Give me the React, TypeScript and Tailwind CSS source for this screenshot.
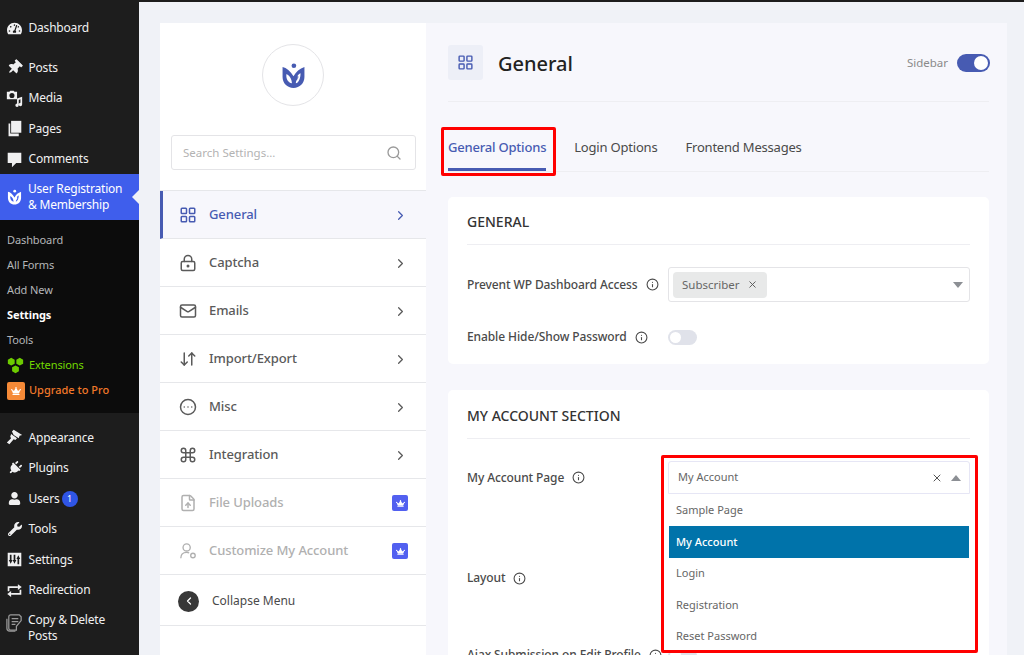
import { ReactNode } from "react";
import { FaCrown, FaPlug, FaTachometerAlt, FaThumbtack, FaUser, FaWrench } from "react-icons/fa";
import {
  ArrowDownUp,
  ChevronLeft,
  ChevronRight,
  CircleEllipsis,
  Command,
  FileUp,
  Info,
  LayoutGrid,
  LockKeyhole,
  Mail,
  Search,
  X,
} from "lucide-react";

const Logo = ({ className }: { className: string }) => (
  <svg viewBox="0 0 32 32" className={className} fill="currentColor">
    <circle cx="16.500" cy="3.500" r="3" />
    <path
      fillRule="evenodd"
      d="M2 5c5 1 10 5 14 12 3-6 8-10 14-12v13c0 8-6 14-14 14S2 26 2 18V5Zm5 9c-1 6 2 11 7 12 0-5-3-10-7-12Zm18-1c-2 1-3 2-4 4l2 1-2 1 .5 1c-2 2-2.500 4-2.500 6 4-1 6-7 6-13Z"
    />
  </svg>
);

const MediaIcon = () => (
  <svg viewBox="0 0 20 20" className="h-[17px] w-[17px]" fill="currentColor">
    <path d="M1 2h3l1-1h4l1 1h3v9H1V2Zm6 1.500a3 3 0 1 0 0 6 3 3 0 0 0 0-6Z" />
    <path d="M13 10l6-2v9a2 2 0 1 1-2-2V11l-2 .7V18a2 2 0 1 1-2-2v-6Z" />
  </svg>
);

const PagesIcon = () => (
  <svg viewBox="0 0 20 20" className="h-[17px] w-[17px]" fill="currentColor">
    <path d="M6 1h12v14H6V1Z" />
    <path d="M3 4h2v12h10v3H3V4Z" />
  </svg>
);

const CommentIcon = () => (
  <svg viewBox="0 0 20 20" className="h-[17px] w-[17px]" fill="currentColor">
    <path d="M2 2h16v12h-6l-5 5v-5H2V2Z" />
  </svg>
);

const BrushIcon = () => (
  <svg viewBox="0 0 20 20" className="h-[17px] w-[17px]" fill="currentColor">
    <path d="M9 1l10 6-3 1-1 3-6-4-2-4 2-2Z" />
    <path d="M6 6l7 5-2 2-2-1-5 6-3-2 5-5-1-2 1-3Z" />
  </svg>
);

const SlidersIcon = () => (
  <svg viewBox="0 0 20 20" className="h-[17px] w-[17px]" fill="currentColor">
    <path
      fillRule="evenodd"
      d="M2 2h16v16H2V2Zm2.500 2.500v6H3.300L5.500 15l2.200-4.500H6.500v-6h-2Zm4.500 0v6H7.800l2.200 4.500 2.200-4.500H11v-6H9Zm4.500 11h2v-6h1.200L14.500 5l-2.200 4.500h1.200v6Z"
    />
  </svg>
);

const RepeatIcon = () => (
  <svg viewBox="0 0 20 20" className="h-[17px] w-[17px]" fill="none" stroke="currentColor" strokeWidth="2">
    <path d="M3 11V6h11" />
    <path d="M17 9v5H6" />
    <path d="M14 2.500 18.500 6 14 9.500Z" fill="currentColor" stroke="none" />
    <path d="M6 10.500 1.500 14 6 17.500Z" fill="currentColor" stroke="none" />
  </svg>
);

const CopyPostsIcon = () => (
  <svg viewBox="0 0 20 20" className="h-[19px] w-[19px]" fill="none" stroke="currentColor" strokeWidth="1.300">
    <path d="M6 2h9l2 2v4l-5 6v4H6a2 2 0 0 1-2-2V4a2 2 0 0 1 2-2Z" />
    <path d="M2 6v10a3 3 0 0 0 3 3h6M7 6h7M7 9h7M7 12h4" />
  </svg>
);

const HexIcon = () => (
  <svg viewBox="0 0 20 20" className="h-[17px] w-[17px] text-[#6dcb00]" fill="currentColor">
    <path d="M5 1l4 2.200v4.600L5 10 1 7.800V3.200L5 1ZM15 1l4 2.200v4.600L15 10l-4-2.200V3.200L15 1ZM10 10l4 2.200v4.600L10 19l-4-2.200v-4.600L10 10Z" />
  </svg>
);

const UserGearIcon = () => (
  <svg viewBox="0 0 20 20" className="h-[18px] w-[18px]" fill="none" stroke="currentColor" strokeWidth="1.500">
    <circle cx="8.500" cy="6" r="4" />
    <path d="M2 18c0-4 2.500-6.500 6.500-6.500 1 0 2 .2 2.800.5" />
    <circle cx="15.500" cy="15" r="2.500" />
  </svg>
);

const TopItem = ({ icon, label, extra }: { icon: ReactNode; label: string; extra?: ReactNode }) => (
  <div className="flex h-[30.5px] items-center text-[12px] tracking-[-0.2px] text-[#f0f0f1]">
    <span className="flex w-[28.500px] shrink-0 items-center justify-center pl-[1px] text-[#f0f0f1]">{icon}</span>
    <span>{label}</span>
    {extra}
  </div>
);

const SubItem = ({ label, active }: { label: string; active?: boolean }) => (
  <div className={`flex h-[25px] items-center pl-[7px] text-[11px] tracking-[-0.1px] ${active ? "font-bold text-white" : "text-[#b4b6b9]"}`}>
    {label}
  </div>
);

const Sidebar = () => (
  <aside className="w-[139px] shrink-0 bg-[#1d1d1d]">
    <div className="pt-[11px]">
      <TopItem icon={<FaTachometerAlt size={15} />} label="Dashboard" />
    </div>
    <div className="mt-[9px]">
      <TopItem icon={<FaThumbtack size={15} className="rotate-45" />} label="Posts" />
      <TopItem icon={<MediaIcon />} label="Media" />
      <TopItem icon={<PagesIcon />} label="Pages" />
      <TopItem icon={<CommentIcon />} label="Comments" />
    </div>
    <div className="relative -mt-px flex h-[46px] items-center bg-[#3f5eec] text-[12px] leading-[16px] tracking-[-0.2px] text-white">
      <span className="flex w-[28px] shrink-0 items-center justify-center pl-[1px]">
        <Logo className="h-[16px] w-[15px]" />
      </span>
      <span>
        User Registration
        <br />& Membership
      </span>
      <span className="absolute right-0 top-[16px] h-0 w-0 border-y-[7px] border-r-[7px] border-y-transparent border-r-[#f0f2f7]" />
    </div>
    <div className="h-[193px] bg-[#0c0c0c] pt-[8px]">
      <SubItem label="Dashboard" />
      <SubItem label="All Forms" />
      <SubItem label="Add New" />
      <SubItem active label="Settings" />
      <SubItem label="Tools" />
      <div className="flex h-[25px] items-center gap-[5px] pl-[7px] text-[11px] tracking-[-0.1px] text-[#72d800]">
        <HexIcon />
        Extensions
      </div>
      <div className="mt-[1px] flex h-[24px] items-center gap-[4px] pl-[7px] text-[11px] font-medium text-[#f0782a]">
        <span className="flex h-[18px] w-[18px] items-center justify-center rounded-[2px] bg-[#f58a37] text-white">
          <FaCrown size={10} />
        </span>
        Upgrade to Pro
      </div>
    </div>
    <div className="pt-[10px]">
      <TopItem icon={<BrushIcon />} label="Appearance" />
      <TopItem icon={<FaPlug size={14} className="rotate-45" />} label="Plugins" />
      <TopItem
        icon={<FaUser size={13} />}
        label="Users"
        extra={
          <span className="ml-[2px] flex h-[16px] w-[16px] items-center justify-center rounded-full bg-[#2f55e6] text-[9px] text-white">
            1
          </span>
        }
      />
      <TopItem icon={<FaWrench size={14} />} label="Tools" />
      <TopItem icon={<SlidersIcon />} label="Settings" />
      <TopItem icon={<RepeatIcon />} label="Redirection" />
      <div className="flex pt-[6px] text-[12px] leading-[16px] tracking-[-0.2px] text-[#f0f0f1]">
        <span className="flex w-[28px] shrink-0 justify-center pl-[1px] pt-[1px] text-[#9a9a9a]">
          <CopyPostsIcon />
        </span>
        <span>
          Copy &amp; Delete
          <br />
          Posts
        </span>
      </div>
    </div>
  </aside>
);

const MenuRow = ({
  icon,
  label,
  active,
  locked,
}: {
  icon: ReactNode;
  label: string;
  active?: boolean;
  locked?: boolean;
}) => (
  <div
    className={`flex h-[48px] items-center border-b border-[#e6e7ea] pr-[18px] pt-[1px] text-[13px] font-medium tracking-[-0.1px] ${
      active
        ? "border-l-[3px] border-l-[#475bb2] bg-[#f7f7fc] pl-[16px] text-[#475bb2]"
        : locked
          ? "pl-[19px] text-[#b0b0b0]"
          : "pl-[19px] text-[#5a5a5a]"
    }`}
  >
    <span className="flex w-[30px] shrink-0">{icon}</span>
    <span className="flex-1">{label}</span>
    {locked ? (
      <span className="flex h-[16px] w-[16px] items-center justify-center rounded-[2px] bg-[#5260f0] text-white">
        <FaCrown size={9} />
      </span>
    ) : (
      <ChevronRight size={15} strokeWidth={2} />
    )}
  </div>
);

const SettingsMenu = () => (
  <div className="w-[266px] shrink-0 bg-white">
    <div className="pt-[21px]">
      <div className="mx-auto flex h-[62px] w-[62px] items-center justify-center rounded-full border border-[#e4e4e7]">
        <Logo className="h-[27px] w-[25px] text-[#475bb2]" />
      </div>
    </div>
    <div className="ml-[11px] mr-[10px] mt-[29px] flex h-[35px] items-center justify-between rounded-[3px] border border-[#e4e4e7] pl-[11px] pr-[13px] text-[11.500px] text-[#b3b3b3]">
      <span>Search Settings...</span>
      <Search size={16} className="text-[#9a9a9a]" />
    </div>
    <div className="mt-[20px] border-t border-[#e6e7ea]">
      <MenuRow active icon={<LayoutGrid size={18} />} label="General" />
      <MenuRow icon={<LockKeyhole size={18} />} label="Captcha" />
      <MenuRow icon={<Mail size={18} />} label="Emails" />
      <MenuRow icon={<ArrowDownUp size={18} />} label="Import/Export" />
      <MenuRow icon={<CircleEllipsis size={18} />} label="Misc" />
      <MenuRow icon={<Command size={18} />} label="Integration" />
      <MenuRow locked icon={<FileUp size={18} />} label="File Uploads" />
      <MenuRow locked icon={<UserGearIcon />} label="Customize My Account" />
      <div className="flex h-[51px] items-center gap-[13px] border-b border-[#e6e7ea] pl-[18px] pt-[2px] text-[12px] text-[#4a4a4a]">
        <span className="flex h-[21px] w-[21px] items-center justify-center rounded-full bg-[#383838] text-white">
          <ChevronLeft size={12} strokeWidth={2.500} />
        </span>
        Collapse Menu
      </div>
    </div>
  </div>
);

const Label = ({ text }: { text: string }) => (
  <span className="flex items-center gap-[8px] whitespace-nowrap text-[12px] font-medium tracking-[-0.1px] text-[#4a4a4a]">
    {text}
    <Info size={13} />
  </span>
);

const Toggle = () => (
  <span className="flex h-[15px] w-[29px] items-center rounded-full bg-[#e0e2ea] pl-[2px]">
    <span className="h-[11px] w-[11px] rounded-full bg-white" />
  </span>
);

const options = ["Sample Page", "My Account", "Login", "Registration", "Reset Password"];

const SettingsContent = () => (
  <div className="flex-1 bg-[#f7f7fc] pl-[22px] pr-[18px] pt-[22px]">
    <div className="flex h-[35px] items-center">
      <span className="flex h-[35px] w-[35px] items-center justify-center rounded-[3px] bg-[#edeff7] text-[#475bb2]">
        <LayoutGrid size={17} />
      </span>
      <h1 className="ml-[15px] flex-1 pt-[2px] text-[20px] font-medium text-[#222]">General</h1>
      <span className="text-[11.500px] text-[#8a8a8a]">Sidebar</span>
      <span className="-mr-px ml-[9px] flex h-[18px] w-[33px] items-center justify-end rounded-full bg-[#475bb2] pr-[2px]">
        <span className="h-[14px] w-[14px] rounded-full bg-white" />
      </span>
    </div>
    <div className="mt-[21px] flex h-[71px] items-end gap-[28px] border-y border-[#eeeef2] text-[13px] tracking-[-0.2px] text-[#4a4a4a]">
      <span className="h-[34px] border-b-[3px] border-[#475bb2] pt-[1px] font-medium text-[#475bb2]">General Options</span>
      <span className="h-[34px] pt-[1px]">Login Options</span>
      <span className="h-[34px] pt-[1px]">Frontend Messages</span>
    </div>
    <section className="mt-[25px] h-[167px] rounded-[5px] bg-white px-[19px]">
      <h2 className="flex h-[48px] items-center border-b border-[#eeeef2] pt-[2px] text-[14px] font-medium text-[#333]">GENERAL</h2>
      <div className="mt-[22px] grid grid-cols-[201px_1fr] items-center">
        <Label text="Prevent WP Dashboard Access" />
        <div className="flex h-[35px] items-center justify-between rounded-[3px] border border-[#e4e4e7] pl-[4px] pr-[6px]">
          <span className="flex h-[26px] items-center gap-[7px] rounded-[4px] bg-[#e8e9e9] px-[9px] text-[11.500px] text-[#666]">
            Subscriber
            <X size={11} className="text-[#555]" />
          </span>
          <span className="h-0 w-0 border-x-[5.500px] border-t-[6px] border-x-transparent border-t-[#8c8f94]" />
        </div>
      </div>
      <div className="mt-[26px] grid grid-cols-[201px_1fr] items-center">
        <Label text="Enable Hide/Show Password" />
        <Toggle />
      </div>
    </section>
    <section className="mt-[26px] h-[300px] rounded-[5px] bg-white px-[19px]">
      <h2 className="flex h-[49px] items-center border-b border-[#eeeef2] pt-[2px] text-[14px] font-medium text-[#333]">MY ACCOUNT SECTION</h2>
      <div className="mt-[22px] grid grid-cols-[201px_1fr] items-center">
        <Label text="My Account Page" />
        <div className="relative flex h-[33px] items-center justify-between rounded-t-[3px] border border-[#e6e6f5] pl-[9px] pr-[8px] text-[11px] text-[#666]">
          My Account
          <span className="flex items-center gap-[8px]">
            <X size={12} className="text-[#555]" />
            <span className="h-0 w-0 border-x-[5.500px] border-b-[6px] border-x-transparent border-b-[#8c8f94]" />
          </span>
          <div className="absolute left-0 right-0 top-[32.500px] z-10 bg-white text-[#666]">
            {options.map((option) =>
              option === "My Account" ? (
                <div key={option} className="flex h-[31.500px] items-center bg-[#0073aa] pl-[7px] font-medium text-white">
                  {option}
                </div>
              ) : (
                <div key={option} className="flex h-[31.500px] items-center pl-[7px]">
                  {option}
                </div>
              ),
            )}
          </div>
          <div className="absolute -left-[8px] -right-[9px] -top-[7px] z-20 h-[198px] rounded-[2px] border-[3px] border-[#f00]" />
        </div>
      </div>
      <div className="mt-[75px] grid grid-cols-[201px_1fr] items-center">
        <Label text="Layout" />
        <span />
      </div>
      <div className="mt-[59px] grid grid-cols-[201px_1fr] items-center">
        <Label text="Ajax Submission on Edit Profile" />
        <Toggle />
      </div>
    </section>
  </div>
);

export default function App() {
  return (
    <div className="flex h-[655px] w-[1024px] overflow-hidden border-t-2 border-t-[#1d1d1d] bg-[#f0f2f7] font-['Noto_Sans',sans-serif]">
      <Sidebar />
      <main className="flex h-[700px] w-[868px] pl-[21px] pt-[21px]">
        <SettingsMenu />
        <SettingsContent />
      </main>
      <div className="pointer-events-none absolute left-[441px] top-[127px] h-[49px] w-[115px] rounded-[2px] border-[3px] border-[#f00]" />
    </div>
  );
}
